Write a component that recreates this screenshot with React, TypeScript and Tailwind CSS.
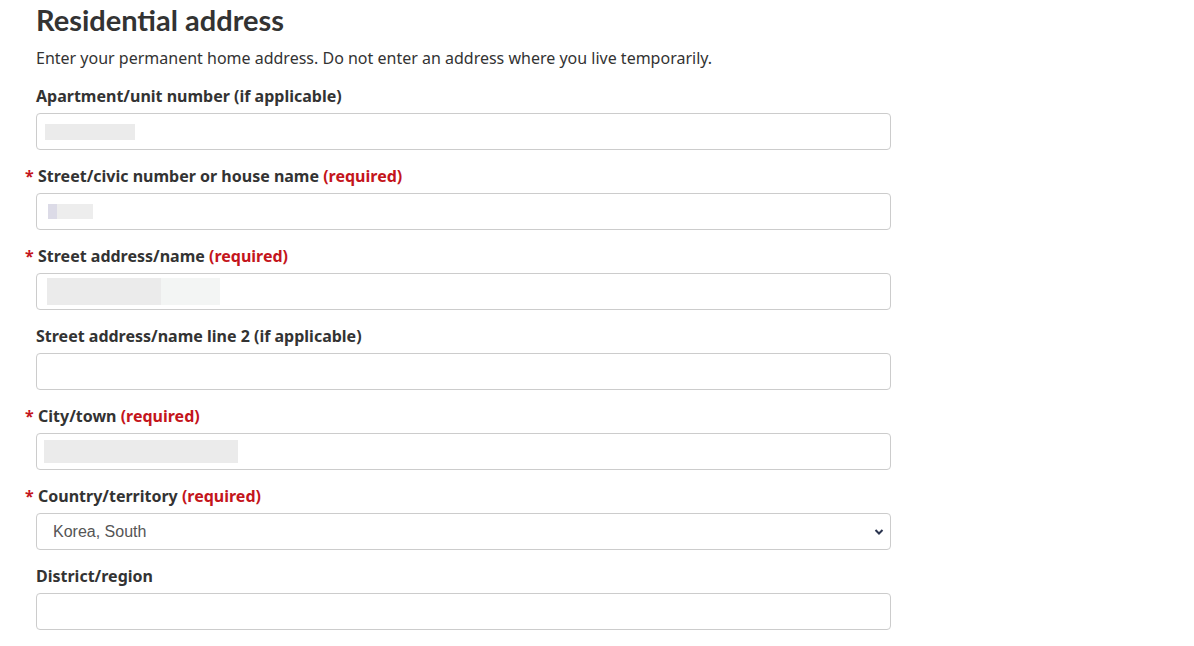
import React from 'react';

type Field = {
  label: string;
  required?: boolean;
  blocks?: { w: number; color: string; h?: number; ml?: number }[];
};

const fields: Field[] = [
  { label: 'Apartment/unit number (if applicable)', blocks: [{ w: 90, color: '#ebebeb', h: 16, ml: 8 }] },
  {
    label: 'Street/civic number or house name',
    required: true,
    blocks: [
      { w: 9, color: '#dcdbe7', h: 15, ml: 11 },
      { w: 36, color: '#ededed', h: 15 },
    ],
  },
  {
    label: 'Street address/name',
    required: true,
    blocks: [
      { w: 114, color: '#ebebeb', h: 27, ml: 10 },
      { w: 59, color: '#f3f5f4', h: 27 },
    ],
  },
  { label: 'Street address/name line 2 (if applicable)' },
  { label: 'City/town', required: true, blocks: [{ w: 194, color: '#ebebeb', h: 23, ml: 7 }] },
];

const Label: React.FC<{ text: string; required?: boolean }> = ({ text, required }) => (
  <div className="h-[24px] leading-[24px] mb-[5px] text-[16px] font-bold text-[#333] relative">
    {required && <span className="absolute left-[-11px] text-[#c4151c]">*</span>}
    <span className={required ? 'ml-[2px]' : ''}>{text}</span>
    {required && <span className="text-[#c4151c]"> (required)</span>}
  </div>
);

const App: React.FC = () => {
  return (
    <div className="min-h-[646px] bg-white font-['Noto_Sans',sans-serif] text-[#333]">
      <div className="w-[855px] ml-[36px] pt-[2px]">
        <h2 className="font-['Lato',sans-serif] font-bold text-[29px] leading-[36px] text-[#333] mb-[8px]">
          Residential address
        </h2>
        <p className="text-[16px] leading-[24px] mb-[14px]">
          Enter your permanent home address. Do not enter an address where you live temporarily.
        </p>

        {fields.map((f) => (
          <div key={f.label} className="mb-[14px]">
            <Label text={f.label} required={f.required} />
            <div className="h-[37px] border border-[#ccc] rounded-[4px] bg-white flex items-center">
              {f.blocks?.map((b, i) => (
                <div
                  key={i}
                  style={{ width: b.w, height: b.h ?? 16, backgroundColor: b.color, marginLeft: b.ml ?? 0 }}
                />
              ))}
            </div>
          </div>
        ))}

        <div className="mb-[14px]">
          <Label text="Country/territory" required />
          <div className="h-[37px] border border-[#ccc] rounded-[4px] bg-white flex items-center justify-between pl-[16px] pr-[6px]">
            <span className="font-['Liberation_Sans',Arial,sans-serif] text-[16px] text-[#555]">Korea, South</span>
            <svg width="10" height="8" viewBox="0 0 10 8" className="text-[#2b3550]">
              <path d="M1.5 2 L5 5.5 L8.5 2" fill="none" stroke="currentColor" strokeWidth="2" />
            </svg>
          </div>
        </div>

        <div className="mb-[14px]">
          <Label text="District/region" />
          <div className="h-[37px] border border-[#ccc] rounded-[4px] bg-white" />
        </div>
      </div>
    </div>
  );
};

export default App;
